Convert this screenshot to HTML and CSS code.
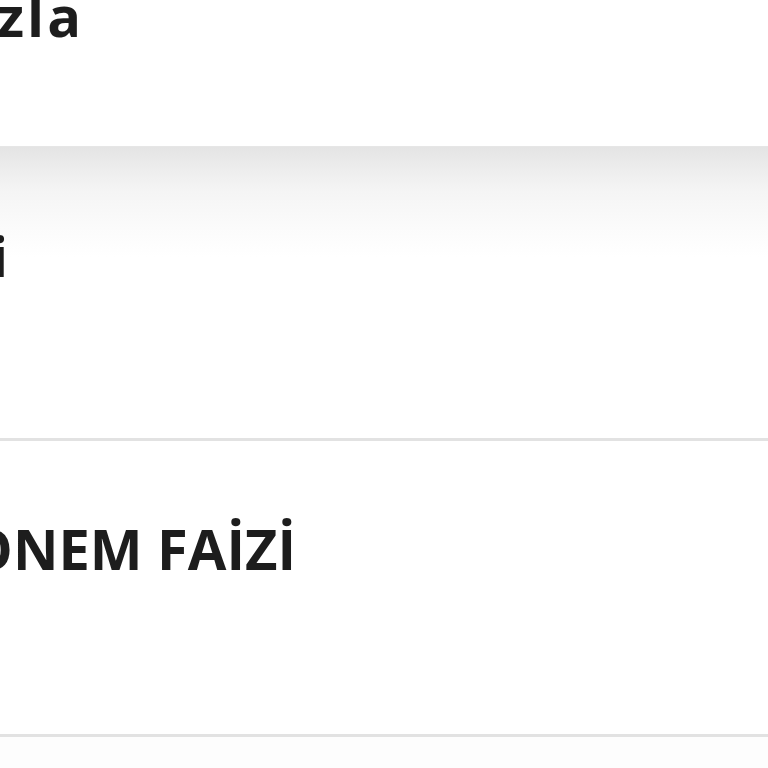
FILE: index.html
```html
<!DOCTYPE html>
<html lang="tr">
<head>
<meta charset="utf-8">
<title>Kredi</title>
<link rel="stylesheet" href="styles.css">
</head>
<body>
<div class="page">
  <section class="top">
    <div class="clip clip-title"><span class="label">Daha Fazla</span></div>
  </section>
  <section class="row row-first">
    <div class="clip clip-one"><span class="label">Kredi Bilgileri</span></div>
  </section>
  <section class="row row-second">
    <div class="clip clip-two"><span class="label">ARA DÖNEM FAİZİ</span></div>
  </section>
  <div class="rest"></div>
</div>
</body>
</html>
```
FILE: styles.css
```css
html, body {
  margin: 0;
  padding: 0;
  background: #fdfdfd;
}
.page {
  width: 768px;
  height: 768px;
  overflow: hidden;
  display: flex;
  flex-direction: column;
  font-family: "Open Sans", "DejaVu Sans", sans-serif;
  font-weight: 700;
  color: #1d1d1d;
}
.top {
  height: 146px;
  flex: none;
  background: #fff;
  overflow: hidden;
}
.clip {
  display: flex;
  justify-content: flex-end;
  overflow: hidden;
  white-space: nowrap;
  font-size: 56px;
  line-height: 60px;
  height: 60px;
}
.label {
  flex: none;
}
.clip-title {
  width: 84px;
  margin-top: -15px;
  letter-spacing: 3px;
}
.clip-one {
  width: 8px;
}
.clip-two {
  width: 296px;
}
.row {
  flex: none;
  box-sizing: border-box;
  border-bottom: 3px solid #e2e2e2;
  background: #fff;
}
.row-first {
  height: 295px;
  padding-top: 78px;
  border-top: 1px solid #e6e6e6;
  background: linear-gradient(#e4e4e4 0, #ececec 20px, #f5f5f5 45px, #fafafa 75px, #fff 110px) no-repeat;
}
.row-second {
  height: 296px;
  padding-top: 77px;
}
.rest {
  flex: 1;
  background: #fdfdfd;
}
```
